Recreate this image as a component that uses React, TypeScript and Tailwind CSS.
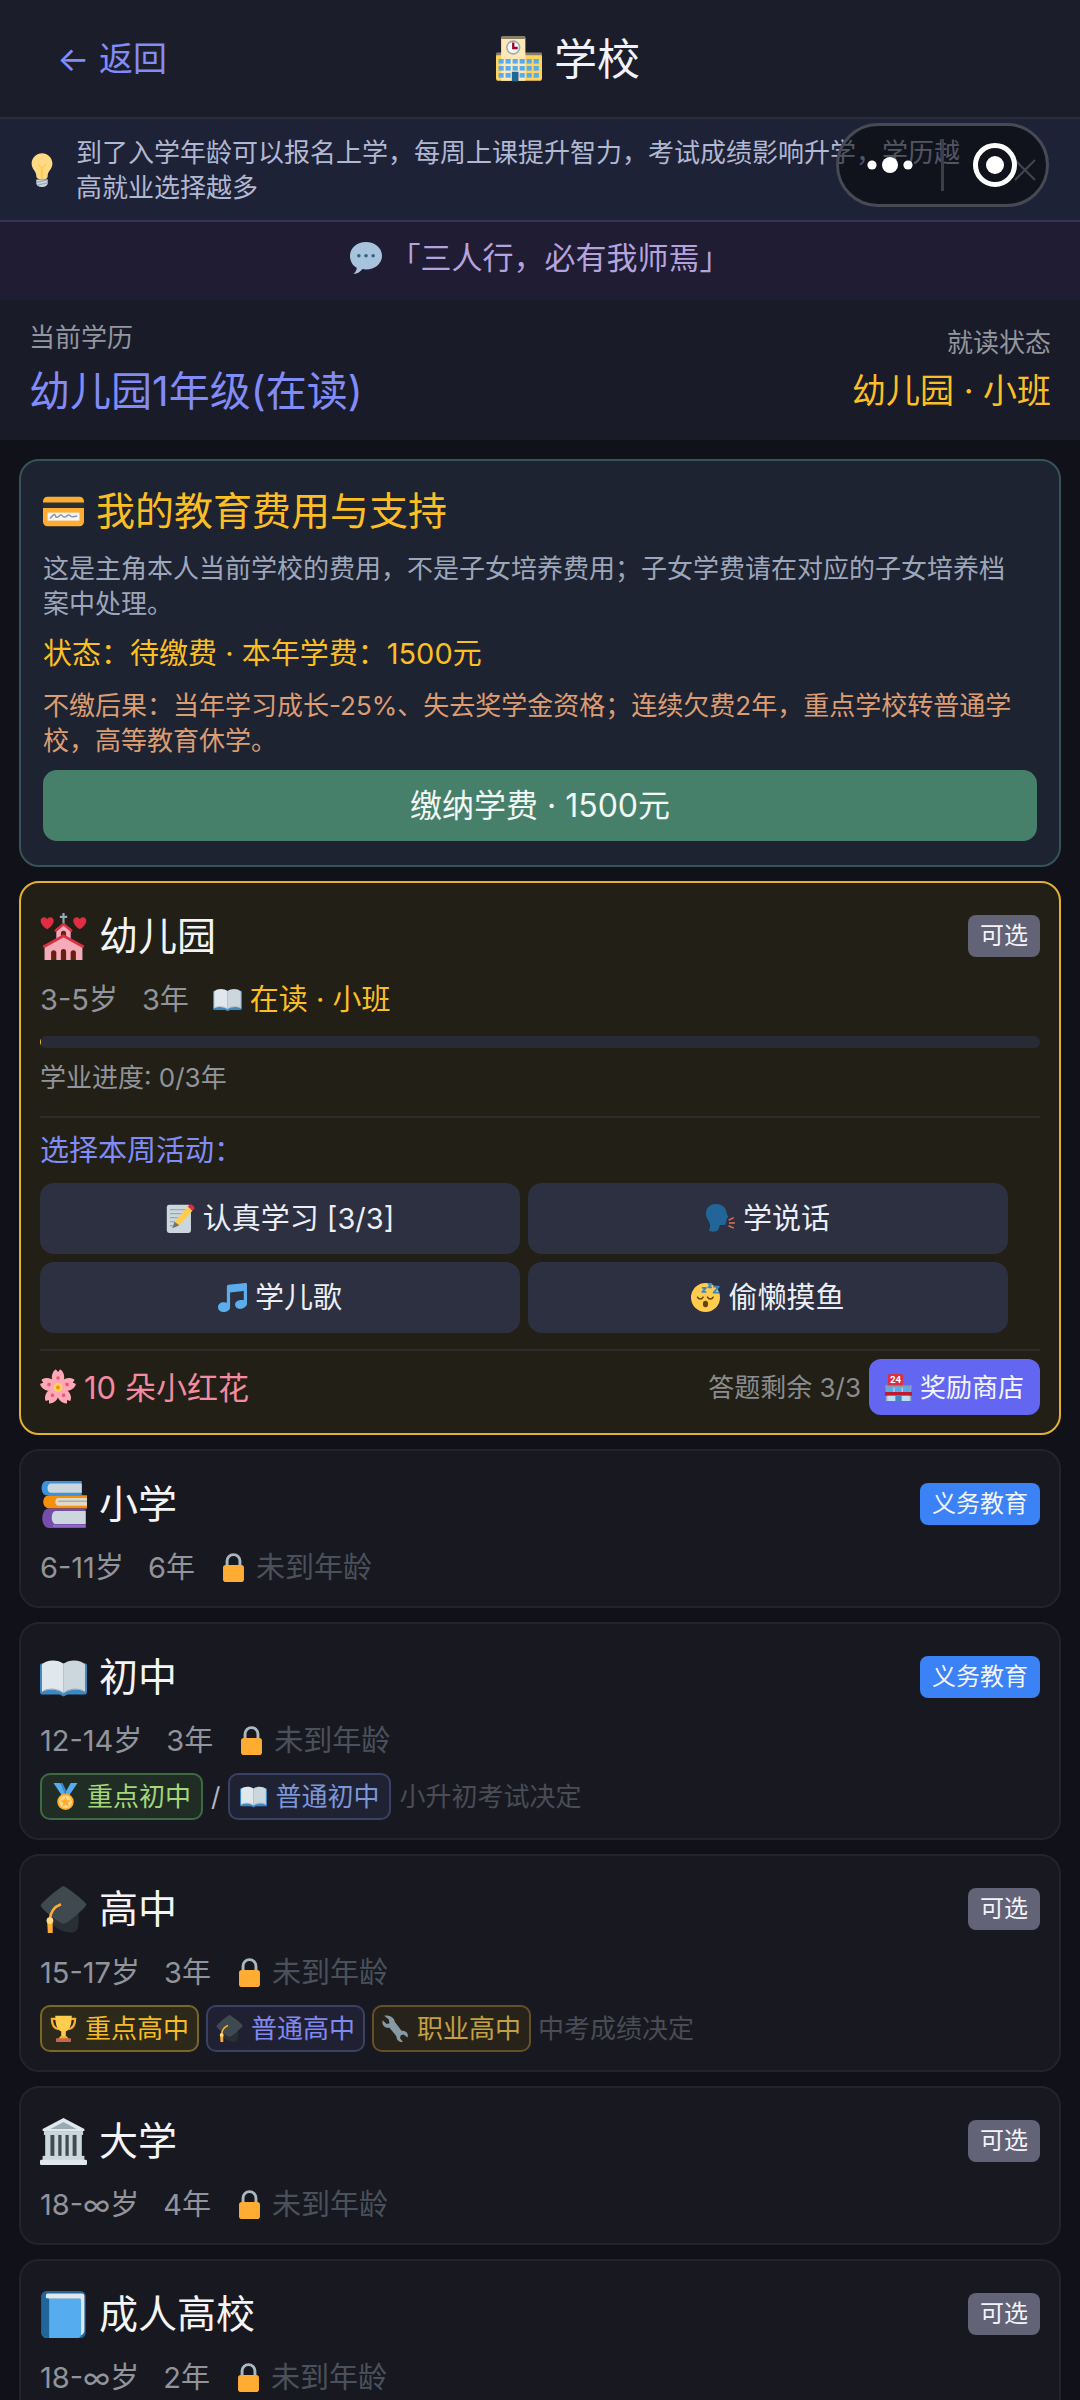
import type { ReactNode } from 'react';

type IconProps = { className?: string };

function Emoji({ className, children }: IconProps & { children: ReactNode }) {
  return (
    <svg viewBox="0 0 36 36" aria-hidden="true" className={`shrink-0 ${className ?? ''}`}>
      {children}
    </svg>
  );
}

function SchoolIcon({ className }: IconProps) {
  return (
    <Emoji className={className}>
      <rect x="0" y="14" width="36" height="21" rx="2" fill="#FFD35C" />
      <rect x="0" y="13" width="36" height="2" rx="1" fill="#8A8067" />
      <path d="M4 1.5h19V35H4z" fill="#FFE8B6" />
      <rect x="4" y="0" width="19" height="2.4" rx="1" fill="#8A8067" />
      <circle cx="13.5" cy="9" r="5.6" fill="#99AAB5" />
      <circle cx="13.5" cy="9" r="4.4" fill="#F5F8FA" />
      <path d="M13.5 5v4.4H17" fill="none" stroke="#A0041E" strokeWidth="1.8" />
      {[18, 23.5, 29].map((y) =>
        [2, 7.5, 13, 18.5, 24, 29.5].map((x) => (
          <rect key={`${x}-${y}`} x={x} y={y} width="4" height="3.6" fill="#55ACEE" />
        )),
      )}
      <rect x="12.4" y="28" width="5.2" height="7.5" fill="#226699" />
    </Emoji>
  );
}

function BulbIcon({ className }: IconProps) {
  return (
    <Emoji className={className}>
      <path d="M29 11.06c0 6.44-5 7.44-5 13.44 0 3.1-3.36 3.5-6 3.5-2.05 0-6-.78-6-3.5 0-6-5-7-5-13.44C7 5.03 12.28.14 18.08.14S29 5.03 29 11.06z" fill="#FFD983" />
      <path d="M14 12l3.5 4v11M22 12l-3.5 4v11" fill="none" stroke="#FFCC4D" strokeWidth="1.4" />
      <path d="M12 28h12v4c0 2-2 4-6 4s-6-2-6-4z" fill="#CCD6DD" />
      <path d="M12 31l12-2.6M13 34l11-2.4" stroke="#99AAB5" strokeWidth="1.4" />
    </Emoji>
  );
}

function SpeechIcon({ className }: IconProps) {
  return (
    <Emoji className={className}>
      <path d="M18 0C8 0 0 6.500 0 15.500c0 6 3 11 7.500 13.500.3 2.500-1.300 5-3.800 7 4.800 0 8.300-2.600 10.300-5.500 1.300.3 2.600.5 4 .5 10 0 18-6.500 18-15.500S28 0 18 0z" fill="#A8C4DC" />
      <circle cx="10" cy="15.500" r="2" fill="#31627E" />
      <circle cx="18" cy="15.500" r="2" fill="#31627E" />
      <circle cx="26" cy="15.500" r="2" fill="#31627E" />
    </Emoji>
  );
}

function CardIcon({ className }: IconProps) {
  return (
    <Emoji className={className}>
      <rect y="5" width="36" height="26" rx="4" fill="#FFAC33" />
      <path d="M0 10h36v5H0z" fill="#292F33" />
      <rect x="4" y="19" width="28" height="7" fill="#F4F7F9" />
      <path d="M6 24l3.500-3.200c2-.8 1 3.200 3.200 2.200s1.600-2.600 3.600-1.800.8 2.200 3 1.600 1.600-2.400 3.800-1.600 1 2 3.200 1.400L30 22" fill="none" stroke="#8899A6" strokeWidth="1.300" />
    </Emoji>
  );
}

function Heart({ x }: { x: number }) {
  return (
    <path
      transform={`translate(${x} 3)`}
      d="M5 9.500C2 7.500 0 5.400 0 2.900 0 1.300 1.200.2 2.700.2 3.700.2 4.600.8 5 1.700 5.400.8 6.300.2 7.300.2 8.800.2 10 1.300 10 2.900c0 2.500-2 4.600-5 6.600z"
      fill="#DD2E44"
    />
  );
}

function ChurchIcon({ className }: IconProps) {
  return (
    <Emoji className={className}>
      <path d="M18 0v9M15.200 3h5.600" stroke="#99AAB5" strokeWidth="1.600" />
      <path d="M12.500 12L18 8l5.500 4v9h-11z" fill="#F4ABBA" />
      <path d="M11.500 14L18 8.500l6.500 5.500" fill="none" stroke="#DD2E44" strokeWidth="2" />
      <path d="M16 20v-4.500a2 2 0 014 0V20z" fill="#662113" />
      <path d="M3.500 25L18 17.500 32.500 25v11h-29z" fill="#F4ABBA" />
      <path d="M2.500 26L18 17.500 33.500 26" fill="none" stroke="#DD2E44" strokeWidth="2.200" />
      <path d="M8.500 36v-5.500a2 2 0 014 0V36zM16 36v-6.500a2 2 0 014 0V36zM23.500 36v-5.500a2 2 0 014 0V36z" fill="#662113" />
      <Heart x={0.5} />
      <Heart x={25.5} />
    </Emoji>
  );
}

function OpenBookIcon({ className }: IconProps) {
  return (
    <Emoji className={className}>
      <path d="M1.500 7h33c.8 0 1.500.8 1.500 2v20c0 1.200-.7 2-1.500 2H21l-3 1.500L15 31H1.500C.7 31 0 30.200 0 29V9c0-1.200.7-2 1.500-2z" fill="#3B88C3" />
      <path d="M1.500 8C5 4 14 4 18 7.500V30C13 26.500 6 26.500 1.500 29z" fill="#E1E8ED" />
      <path d="M34.500 8C31 4 22 4 18 7.500V30c5-3.500 12-3.500 16.500-1z" fill="#CCD6DD" />
      <path d="M3 28c5-2 11-1.500 15 2 4-3.500 10-4 15-2" fill="none" stroke="#99AAB5" strokeWidth=".8" />
    </Emoji>
  );
}

function MemoIcon({ className }: IconProps) {
  return (
    <Emoji className={className}>
      <rect x="1" y="1" width="30" height="35" rx="3" fill="#CCD6DD" />
      <path d="M5 7h22M5 12h18M5 17h14M5 22h10M5 27h8" stroke="#99AAB5" strokeWidth="1.600" />
      <path d="M8 30l2.500-8L27 3.500l6 4.500L16.500 26.500z" fill="#FFCC4D" />
      <path d="M27 3.500l2.300-2.600c2.700-.8 6.300 2 6 4.600L33 8z" fill="#DD2E44" />
      <path d="M8 30l2.500-8 6 4.500z" fill="#66757F" />
    </Emoji>
  );
}

function SpeakingIcon({ className }: IconProps) {
  return (
    <Emoji className={className}>
      <path d="M12 0c8 0 13 4.500 13.500 11 .1 1.600 2 4 2 5 0 1.200-2 1.200-2 2.200l.2 2.200-1.200 1.200.4 1.600c-.4 2-1.600 3-3.600 3h-3.500c-1.500 0-1 3-2.500 5.500-2 3.500-10 3.500-11.800 1C5 30 6 26 4 22.500 1.500 19 0 16 0 11.500 0 5 5 0 12 0z" fill="#269" />
      <path d="M28 20l6.500-3M28.500 23.500H36M28 27l6.500 3" stroke="#E0704E" strokeWidth="1.800" />
    </Emoji>
  );
}

function MusicIcon({ className }: IconProps) {
  return (
    <Emoji className={className}>
      <path d="M34.200.1L13 2.300c-1 .1-2 1.200-2 2.200v19.900A9 9 0 007 24c-4 0-7 2.600-7 6s3 6 7 6 8-2.600 8-6V11.700L32 9.900v11.400c-1-.3-2.500-.4-4-.2-4 .3-6.800 3-6.800 6s3 5.300 6.800 5c4.200-.3 8-3.300 8-6.300V1.800C36 .8 35.200 0 34.200.1z" fill="#5DADEC" />
    </Emoji>
  );
}

function SleepIcon({ className }: IconProps) {
  return (
    <Emoji className={className}>
      <circle cx="18" cy="18" r="18" fill="#FFCC4D" />
      <ellipse cx="18" cy="26" rx="3.200" ry="4" fill="#664500" />
      <path d="M8 17.500c1.500 3 5.500 3 7 0M20.500 17.500c1.500 3 5.500 3 7 0" fill="none" stroke="#664500" strokeWidth="1.800" strokeLinecap="round" />
      <g fill="none" stroke="#3B88C3" strokeWidth="2.200" strokeLinejoin="round">
        <path d="M13.500 6h5l-4.500 5h5" />
        <path d="M21 1h4.500l-4 4.500H26" />
        <path d="M27.500 4.500h7l-6.500 7.500h7" />
      </g>
    </Emoji>
  );
}

function BlossomIcon({ className }: IconProps) {
  return (
    <Emoji className={className}>
      {[0, 72, 144, 216, 288].map((deg) => (
        <g key={deg} transform={`rotate(${deg} 18 18.5)`}>
          <path d="M18 18.500c-5-3-7.500-9-5.500-14C13.200 2.500 15 .5 16 .5L18 3l2-2.500c1 0 2.800 2 3.500 4 2 5-.5 11-5.500 14z" fill="#FFA8B8" />
          <circle cx="18" cy="9" r="1.800" fill="#EA596E" />
        </g>
      ))}
      <circle cx="18" cy="18.500" r="4.500" fill="#F8D35E" />
      <circle cx="18" cy="18.500" r="2" fill="#F4900C" />
    </Emoji>
  );
}

function StoreIcon({ className }: IconProps) {
  return (
    <Emoji className={className}>
      <rect x="1" y="17" width="34" height="19" fill="#99AAB5" />
      <rect x="0" y="15" width="36" height="3" fill="#8899A6" />
      <rect x="2" y="18" width="32" height="6" fill="#55ACEE" />
      <path d="M12 18v6M23 18v6" stroke="#CCD6DD" strokeWidth="1.500" />
      <path d="M0 24h36v5H0z" fill="#BE1931" />
      <rect x="3" y="29" width="11" height="7" fill="#BBDDF5" />
      <rect x="22" y="29" width="11" height="7" fill="#BBDDF5" />
      <rect x="14" y="28" width="8" height="8" fill="#3B88C3" />
      <rect x="4" y="0" width="20" height="15" rx="2" fill="#DD2E44" />
      <text x="14" y="12" textAnchor="middle" fontSize="13" fontWeight="700" fill="#fff" fontFamily="Roboto, sans-serif">
        24
      </text>
    </Emoji>
  );
}

function BooksIcon({ className }: IconProps) {
  return (
    <Emoji className={className}>
      <path d="M5 0h27v11H5c-5 0-5-11 0-11z" fill="#3B94D9" />
      <path d="M8 2h24v7H8c-3 0-3-7 0-7z" fill="#CCD6DD" />
      <path d="M7 11h29v10H7c-6 0-6-10 0-10z" fill="#F4900C" />
      <path d="M14 13h22v6H14c-3 0-3-6 0-6z" fill="#E1D8C8" />
      <path d="M14 15.500h22" stroke="#99AAB5" />
      <path d="M7 21h28v15H7c-7 0-7-15 0-15z" fill="#744EAA" />
      <path d="M12 23h23v10H12c-4 0-4-10 0-10z" fill="#CCD6DD" />
      <path d="M10 34.500h25" stroke="#9266CC" strokeWidth="2" />
    </Emoji>
  );
}

function LockIcon({ className }: IconProps) {
  return (
    <Emoji className={className}>
      <path d="M10 18v-8a8 8 0 0116 0v8" fill="none" stroke="#AAB8C2" strokeWidth="3.600" />
      <rect x="5" y="15" width="26" height="21" rx="3.500" fill="#FFAC33" />
    </Emoji>
  );
}

function MedalIcon({ className }: IconProps) {
  return (
    <Emoji className={className}>
      <path d="M2 0h9l8 14-5 4zM34 0h-9l-8 14 5 4z" fill="#55ACEE" />
      <path d="M11 0h3l5 10-2 4z" fill="#3B88C3" />
      <circle cx="18" cy="25" r="11" fill="#FFAC33" />
      <circle cx="18" cy="25" r="8.500" fill="#FFD983" />
      <path d="M18 18.500l2 4.500 5 .4-3.800 3.200 1.200 4.900-4.400-2.700-4.400 2.700 1.200-4.900L11 23.400l5-.4z" fill="#FFAC33" />
    </Emoji>
  );
}

function CapIcon({ className }: IconProps) {
  return (
    <Emoji className={className}>
      <path d="M8 19v9c4 6 17 10 20 6 2-3 2-12 1-18z" fill="#292F33" />
      <path d="M18 0c1.500 0 17 12 17.500 14S21 29 18 29 .5 17 .5 15 16.500 0 18 0z" fill="#3F4A50" />
      <path d="M16 14c-4 1.500-8 5-8.500 12" fill="none" stroke="#FFAC33" strokeWidth="2" />
      <path d="M5.500 27h4.200v9H6z" fill="#FFAC33" />
      <circle cx="7.600" cy="26.500" r="2.600" fill="#FFD983" />
    </Emoji>
  );
}

function TrophyIcon({ className }: IconProps) {
  return (
    <Emoji className={className}>
      <path d="M8 5H2.500c0 8 3 13 9 14M28 5h5.500c0 8-3 13-9 14" fill="none" stroke="#FFAC33" strokeWidth="3" />
      <path d="M7 1h22c0 13-3 19-8 21v6h-6v-6C10 20 7 14 7 1z" fill="#FFCC4D" />
      <path d="M14 28h8l3 4H11z" fill="#FFAC33" />
      <rect x="8" y="31" width="20" height="5" rx="1" fill="#C1694F" />
    </Emoji>
  );
}

function WrenchIcon({ className }: IconProps) {
  return (
    <Emoji className={className}>
      <path d="M3 1l6 5 1 5-4 1-5-5c-2 6 3 11 9 10l9 11c0 5 4 9 9 8l-4-5 1-4 4-1 5 4c2-6-3-10-8-9L17 9C17 4 10-1 3 1z" fill="#8899A6" />
    </Emoji>
  );
}

function BankIcon({ className }: IconProps) {
  return (
    <Emoji className={className}>
      <path d="M4 12h28v18H4z" fill="#3E4B53" />
      <path d="M18 0l16 8.500V10H2V8.500z" fill="#E1E8ED" />
      <path d="M18 3l10 5.500H8z" fill="#99AAB5" />
      <rect x="3" y="10" width="30" height="3" fill="#CCD6DD" />
      <path d="M4 13h4v17H4zM11 13h3v17h-3zM16.500 13h3v17h-3zM22 13h3v17h-3zM28 13h4v17h-4z" fill="#CCD6DD" />
      <rect x="2" y="29" width="32" height="4" fill="#CCD6DD" />
      <rect x="0" y="32" width="36" height="4" rx="1" fill="#E1E8ED" />
    </Emoji>
  );
}

function BlueBookIcon({ className }: IconProps) {
  return (
    <Emoji className={className}>
      <rect x="1" y="0" width="34" height="36" rx="4" fill="#226699" />
      <path d="M6 2h26c1.500 0 2 1 2 2v26c0 2-1 3.500-3 4V6H5C4 4 4.500 2 6 2z" fill="#E1E8ED" />
      <path d="M4 6h25c1.500 0 2.500.8 2.500 2.500V33c0 2-1 3-2.500 3H6c-2 0-4-1-4-4V5z" fill="#55ACEE" />
      <path d="M1 3v29c0 2.500 2 4 5 4h1V6C4 6 3 4 3.500 2z" fill="#226699" />
    </Emoji>
  );
}

function Badge({ compulsory }: { compulsory?: boolean }) {
  return (
    <span
      className={`rounded-lg px-3 text-[24px] leading-[42px] text-[#f4f4fa] ${compulsory ? 'bg-[#3b82f6]' : 'bg-[#636377]'}`}
    >
      {compulsory ? '义务教育' : '可选'}
    </span>
  );
}

type StageProps = {
  icon: ReactNode;
  name: string;
  ages: string;
  years: string;
  compulsory?: boolean;
  active?: boolean;
  status?: ReactNode;
  children?: ReactNode;
};

function StageCard({ icon, name, ages, years, compulsory, active, status, children }: StageProps) {
  return (
    <section
      className={`rounded-[20px] border-2 px-[19px] py-[18px] ${
        active ? 'border-[#e3b034] bg-[#222016]' : 'border-[#22232c] bg-[#181920]'
      }`}
    >
      <div className="flex h-[70px] items-center justify-between">
        <div className="flex items-center gap-3">
          {icon}
          <h2 className="text-[39px] leading-[56px] text-[#f4f4f6]">{name}</h2>
        </div>
        <Badge compulsory={compulsory} />
      </div>
      <div className="mt-2 flex items-center gap-6 text-[29px] leading-[41px] text-[#92949b]">
        <span>{ages}</span>
        <span>{years}</span>
        {status ?? (
          <span className="flex items-center gap-2 text-[#4b515c]">
            <LockIcon className="size-[29px]" />
            未到年龄
          </span>
        )}
      </div>
      {children}
    </section>
  );
}

function Tag({ icon, tone, children }: { icon: ReactNode; tone: string; children: ReactNode }) {
  return (
    <span className={`flex h-[47px] items-center gap-2 rounded-[10px] border-2 text-[26px] ${tone}`}>
      {icon}
      {children}
    </span>
  );
}

const activities = [
  { label: '认真学习 [3/3]', icon: <MemoIcon className="size-[29px]" /> },
  { label: '学说话', icon: <SpeakingIcon className="size-[29px]" /> },
  { label: '学儿歌', icon: <MusicIcon className="size-[29px]" /> },
  { label: '偷懒摸鱼', icon: <SleepIcon className="size-[29px]" /> },
];

export default function App() {
  return (
    <div className="relative flex h-screen flex-col overflow-hidden bg-[#101119] font-['Inter','Noto_Sans_CJK_SC',sans-serif]">
      <header className="flex items-center border-b-2 border-[#2b2d3a] bg-[#1b1d2a] pt-[29px] pr-[111px] pb-[28px] pl-[57px]">
        <button className="text-[34px] leading-[60px] text-[#818cf8]">← 返回</button>
        <h1 className="flex flex-1 items-center justify-center gap-3 text-[43px] leading-[60px] text-[#f1f2f9]">
          <SchoolIcon className="size-[46px]" />
          学校
        </h1>
      </header>

      {/* Tip */}
      <div className="flex items-center border-b-2 border-[#33365a] bg-[#1e2236] pt-4 pr-8 pb-[15px] pl-[25px] text-[26px] leading-[35px] text-[#b1b8d3]">
        <BulbIcon className="size-[34px]" />
        <p className="ml-[17px] flex-1 pr-6">
          到了入学年龄可以报名上学，每周上课提升智力，考试成绩影响升学，学历越高就业选择越多
        </p>
        <button aria-label="关闭提示" className="flex w-[46px] shrink-0 justify-center text-[#8f93ab]">
          <svg viewBox="0 0 22 22" className="size-[22px]" fill="none" stroke="currentColor" strokeWidth="2">
            <path d="M1 1l20 20M21 1L1 21" />
          </svg>
        </button>
      </div>

      {/* Quote */}
      <div className="flex items-center justify-center gap-2 bg-[#1f1c34] pt-[13px] pb-[19px] text-[31px] leading-[46px] text-[#b5a3dc]">
        <SpeechIcon className="size-[32px]" />
        <p>「三人行，必有我师焉」</p>
      </div>

      {/* Current education */}
      <div className="flex items-center justify-between bg-[#191b29] px-[29px] py-5">
        <div>
          <p className="mb-[6px] text-[26px] leading-[36px] text-[#93959f]">当前学历</p>
          <p className="text-[41px] leading-[58px] text-[#818cf8]">幼儿园1年级(在读)</p>
        </div>
        <div className="text-right">
          <p className="mb-[6px] text-[26px] leading-[36px] text-[#93959f]">就读状态</p>
          <p className="text-[34px] leading-[48px] text-[#fbbf24]">幼儿园 · 小班</p>
        </div>
      </div>

      <main className="flex flex-1 flex-col gap-[14px] overflow-y-auto px-[19px] pt-[19px] pb-8 [scrollbar-width:none]">
        <section className="rounded-[20px] border-2 border-[#365357] bg-[#1e2332] px-[22px] pt-[22px] pb-6">
          <h2 className="flex items-center gap-3 text-[39px] leading-[56px] text-[#fbbf24]">
            <CardIcon className="size-[41px]" />
            我的教育费用与支持
          </h2>
          <p className="mt-3 pr-4 text-[26px] leading-[35px] text-[#9ea6ba]">
            这是主角本人当前学校的费用，不是子女培养费用；子女学费请在对应的子女培养档案中处理。
          </p>
          <p className="mt-3 text-[29px] leading-[41px] text-[#fbbf24]">状态：待缴费 · 本年学费：1500元</p>
          <p className="mt-[14px] pr-4 text-[26px] leading-[35px] text-[#dc9d72]">
            不缴后果：当年学习成长-25%、失去奖学金资格；连续欠费2年，重点学校转普通学校，高等教育休学。
          </p>
          <button className="mt-3 h-[71px] w-full rounded-[14px] bg-[#47806a] text-[32px] text-[#f0f7f4]">
            缴纳学费 · 1500元
          </button>
        </section>

        <StageCard
          active
          icon={<ChurchIcon className="size-[47px]" />}
          name="幼儿园"
          ages="3-5岁"
          years="3年"
          status={
            <span className="flex items-center gap-2 text-[#fbbf24]">
              <OpenBookIcon className="size-[29px]" />
              在读 · 小班
            </span>
          }
        >
          <div className="mt-4 h-3 overflow-hidden rounded-md bg-[#282a36]">
            <div className="h-full w-px bg-[#fbbf24]" />
          </div>
          <p className="mt-[11px] text-[26px] leading-[37px] text-[#92949b]">学业进度: 0/3年</p>
          <div className="mt-5 border-t-2 border-[#2c2c2d] pt-3">
            <p className="text-[29px] leading-[41px] text-[#818cf8]">选择本周活动：</p>
            <div className="mt-3 mr-8 grid grid-cols-2 gap-2">
              {activities.map((a) => (
                <button
                  key={a.label}
                  className="flex h-[71px] items-center justify-center gap-2 rounded-[14px] bg-[#2d3040] text-[29px] text-[#eceef6]"
                >
                  {a.icon}
                  {a.label}
                </button>
              ))}
            </div>
          </div>
          <div className="mt-4 flex items-center justify-between border-t-2 border-[#2c2c2d] pt-2">
            <p className="flex items-center gap-2 text-[31px] leading-[45px] text-[#f48ba2]">
              <BlossomIcon className="size-[36px]" />
              10 朵小红花
            </p>
            <div className="flex items-center gap-2 text-[26px] text-[#8b8c8f]">
              答题剩余 3/3
              <button className="flex h-14 items-center gap-2 rounded-xl bg-[#6366f1] px-4 text-[26px] text-[#f4f4fe]">
                <StoreIcon className="size-[27px]" />
                奖励商店
              </button>
            </div>
          </div>
        </StageCard>

        <StageCard icon={<BooksIcon className="size-[47px]" />} name="小学" ages="6-11岁" years="6年" compulsory />

        <StageCard icon={<OpenBookIcon className="size-[47px]" />} name="初中" ages="12-14岁" years="3年" compulsory>
          <div className="mt-3 flex items-center gap-2 text-[26px] text-[#4a4c56]">
            <Tag icon={<MedalIcon className="size-[27px]" />} tone="px-[10px] border-[#3d6a43] bg-[#202d24] text-[#a5d67b]">
              重点初中
            </Tag>
            <span className="text-[#b4b6bf]">/</span>
            <Tag icon={<OpenBookIcon className="size-[27px]" />} tone="px-[10px] border-[#394265] bg-[#1f2233] text-[#7c97d8]">
              普通初中
            </Tag>
            小升初考试决定
          </div>
        </StageCard>

        <StageCard icon={<CapIcon className="size-[47px]" />} name="高中" ages="15-17岁" years="3年">
          <div className="mt-3 flex items-center gap-[7px] text-[26px] text-[#4a4c56]">
            <Tag icon={<TrophyIcon className="size-[27px]" />} tone="px-2 border-[#7a6727] bg-[#2c281a] text-[#f7bb26]">
              重点高中
            </Tag>
            <Tag icon={<CapIcon className="size-[27px]" />} tone="px-2 border-[#3b4065] bg-[#1f2133] text-[#8088ee]">
              普通高中
            </Tag>
            <Tag icon={<WrenchIcon className="size-[27px]" />} tone="px-2 border-[#655127] bg-[#28231a] text-[#c3a043]">
              职业高中
            </Tag>
            中考成绩决定
          </div>
        </StageCard>

        <StageCard icon={<BankIcon className="size-[47px]" />} name="大学" ages="18-∞岁" years="4年" />
        <StageCard icon={<BlueBookIcon className="size-[47px]" />} name="成人高校" ages="18-∞岁" years="2年" />
      </main>

      {/* Mini program capsule, floats over the page */}
      <div className="absolute top-[123px] right-[31px] flex h-[84px] w-[213px] items-center rounded-full border-[3px] border-[#474955] bg-[#070709]/56">
        <button aria-label="更多" className="flex flex-1 justify-center">
          <svg viewBox="0 0 46 18" className="h-[18px] w-[46px]" fill="#fff">
            <circle cx="5" cy="9" r="4.600" />
            <circle cx="23" cy="9" r="8" />
            <circle cx="41" cy="9" r="4.600" />
          </svg>
        </button>
        <span className="h-[52px] w-[3px] bg-[#3c3e4a]" />
        <button aria-label="退出" className="flex flex-1 justify-center">
          <svg viewBox="0 0 44 44" className="size-[44px]">
            <circle cx="22" cy="22" r="19.500" fill="none" stroke="#fff" strokeWidth="5" />
            <circle cx="22" cy="22" r="9" fill="#fff" />
          </svg>
        </button>
      </div>
    </div>
  );
}
